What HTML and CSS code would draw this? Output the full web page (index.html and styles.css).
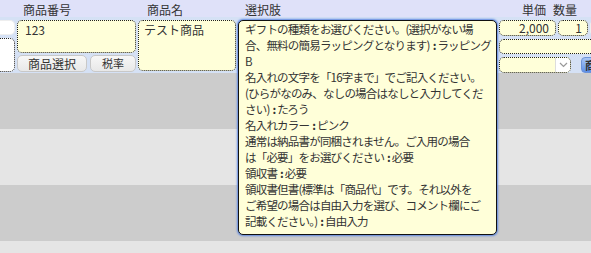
FILE: index.html
```html
<!DOCTYPE html>
<html lang="ja">
<head>
    <meta charset="UTF-8">
    <title>注文明細</title>
    <link rel="stylesheet" href="styles.css">
</head>
<body>
    <div class="head">
        <span class="h-no">商品番号</span>
        <span class="h-name">商品名</span>
        <span class="h-opt">選択肢</span>
        <span class="h-price">単価</span>
        <span class="h-qty">数量</span>
    </div>
    <div class="row">
        <div class="col col-edge">
            <div class="box white small"></div>
            <div class="box white tall"></div>
        </div>
        <div class="col col-no">
            <div class="box yellow code">123</div>
            <div class="btns">
                <button class="btn btn-select">商品選択</button>
                <button class="btn btn-tax">税率</button>
            </div>
        </div>
        <div class="col col-name">
            <div class="box yellow name">テスト商品</div>
        </div>
        <div class="col col-opt">
            <div class="popup">ギフトの種類をお選びください。(選択がない場
合、無料の簡易ラッピングとなります)<span class="c">:</span>ラッピング
B
名入れの文字を「16字まで」でご記入ください。
(ひらがなのみ、なしの場合はなしと入力してくだ
さい)<span class="c">:</span>たろう
名入れカラー<span class="c">:</span>ピンク
通常は納品書が同梱されません。ご入用の場合
は「必要」をお選びください<span class="c">:</span>必要
領収書<span class="c">:</span>必要
領収書但書(標準は「商品代」です。それ以外を
ご希望の場合は自由入力を選び、コメント欄にご
記載ください。)<span class="c">:</span>自由入力</div>
        </div>
        <div class="col col-right">
            <div class="line">
                <div class="box yellow price">2,000</div>
                <div class="box yellow qty">1</div>
                <div class="box white rest"></div>
            </div>
            <div class="box yellow wide"></div>
            <div class="line">
                <div class="box yellow select">
                    <span class="arrow">
                        <svg width="9" height="6" viewBox="0 0 9 6"><path d="M1 1 L4.5 4.5 L8 1" fill="none" stroke="#999" stroke-width="1.2"/></svg>
                    </span>
                </div>
                <button class="btn-blue">商品</button>
            </div>
        </div>
    </div>
    <div class="list">
        <div class="stripe dark"></div>
        <div class="stripe light"></div>
        <div class="stripe dark"></div>
        <div class="stripe light"></div>
    </div>
</body>
</html>
```

FILE: styles.css
```css
body {
    margin: 0;
    font-family: "Noto Sans CJK JP", "DejaVu Sans", sans-serif;
    font-size: 12px;
    color: #333;
    background: #e5e5e5;
    overflow: hidden;
}
.head {
    height: 17px;
    background: #dfe1f9;
    position: relative;
    line-height: 17px;
}
.head span {
    position: absolute;
    top: 1px;
}
.h-no { left: 23px; }
.h-name { left: 147px; }
.h-opt { left: 245px; }
.h-price { left: 522px; }
.h-qty { left: 553px; }
.row {
    height: 53px;
    padding-top: 3px;
    background: #d5e1f5;
    display: flex;
    gap: 2px;
}
.col {
    display: flex;
    flex-direction: column;
    flex-shrink: 0;
    gap: 3px;
}
.col-edge { width: 15px; }
.col-no { width: 119px; gap: 2px; }
.col-name { width: 98px; }
.col-opt { width: 259px; position: relative; }
.col-right { flex: 1 0 110px; }
.box {
    box-sizing: border-box;
    border: 1px dotted #222;
    border-radius: 5px;
}
.white {
    background: #fff;
    border: 1px solid #eee;
}
.yellow { background: #ffffd9; }
.small { height: 15px; border-radius: 0 5px 5px 0; border-left: none; }
.tall { height: 34px; border: 1px dotted #222; border-left: none; border-radius: 0 5px 5px 0; }
.code {
    height: 33px;
    padding: 1px 7px;
    line-height: 15px;
}
.name {
    height: 51px;
    padding: 1px 5px;
    line-height: 15px;
}
.btns {
    display: flex;
    gap: 3px;
}
.btn {
    height: 17px;
    padding: 0;
    font: inherit;
    color: #333;
    line-height: 15px;
    background: linear-gradient(#f7f7f7, #e8e8e8);
    border: 1px solid #c8c8c8;
    border-radius: 5px;
}
.btn-select { width: 70px; }
.btn-tax { width: 46px; font-size: 11px; }
.popup {
    position: absolute;
    top: 0;
    left: 0;
    width: 259px;
    height: 215px;
    box-sizing: border-box;
    padding: 0 4px 0 6px;
    background: #ffffd9;
    border: 1px solid #111;
    border-radius: 5px;
    box-shadow: 0 0 2px 1px #5b86e0;
    white-space: pre;
    font-size: 11.5px;
    line-height: 16px;
    letter-spacing: -0.8px;
    overflow: hidden;
    z-index: 2;
}
.popup .c {
    display: inline-block;
    height: 16px;
    line-height: 16px;
    vertical-align: top;
    margin: 0 1px 0 3px;
    letter-spacing: 0;
    font-weight: bold;
}
.line {
    display: flex;
    gap: 2px;
}
.price {
    width: 57px;
    height: 16px;
    text-align: right;
    padding-right: 6px;
    line-height: 14px;
}
.qty {
    width: 30px;
    height: 16px;
    text-align: right;
    padding-right: 5px;
    line-height: 14px;
}
.rest { flex: 1; height: 16px; border-right: none; border-radius: 5px 0 0 5px; }
.wide { height: 15px; border-right: none; border-radius: 5px 0 0 5px; }
.select {
    width: 72px;
    height: 16px;
    display: flex;
    justify-content: flex-end;
}
.arrow {
    width: 14px;
    background: #fff;
    border-left: 1px solid #ddd;
    border-radius: 0 4px 4px 0;
    display: flex;
    align-items: center;
    justify-content: center;
}
.btn-blue {
    margin-left: 8px;
    height: 16px;
    width: 30px;
    flex-shrink: 0;
    padding: 0 3px;
    font: inherit;
    font-size: 11px;
    font-weight: bold;
    color: #333;
    text-align: left;
    line-height: 12px;
    background: linear-gradient(#a9c6f5, #5d8fe8);
    border: 1px solid #6d93d8;
    border-radius: 4px 0 0 4px;
}
.list {
    height: 180px;
    overflow: hidden;
}
.stripe { height: 56px; }
.dark { background: #cccccc; }
.light { background: #e5e5e5; }
```
